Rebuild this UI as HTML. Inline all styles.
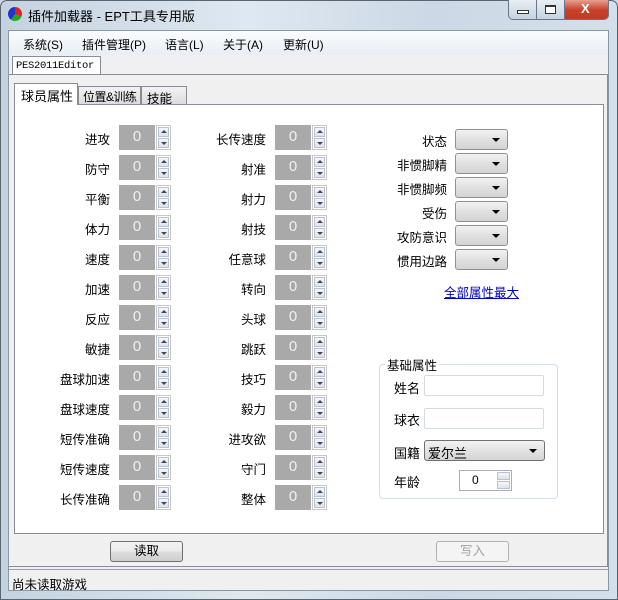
<!DOCTYPE html>
<html><head><meta charset="utf-8"><style>
*{margin:0;padding:0;box-sizing:border-box;white-space:nowrap}
body{width:618px;height:600px;position:relative;overflow:hidden;background:#c9d7e6;font-family:"Liberation Sans","Noto Sans CJK SC",sans-serif;font-size:12px;color:#000}
.a{position:absolute}
.frame{left:0;top:0;width:618px;height:600px;border:1px solid #5a6572;border-radius:7px 7px 0 0;background:linear-gradient(90deg,#c4d2e0,#dfe8f0 40%,#ccd8e5 70%,#d4dfea)}
.title{left:28px;top:6px;font-size:13px;color:#000}
.client{left:8px;top:30px;width:601px;height:561px;background:#f0f0f0;border:1px solid #8b97a3}
.menu{left:9px;top:31px;width:599px;height:24px;background:linear-gradient(#fafcfe,#e8eef5)}
.menu span{position:absolute;top:5px;font-size:12px}
.lbl{position:absolute;font-size:12.5px;text-align:right;width:70px}
.sp{position:absolute;width:52px;height:25px}
.sp .v{position:absolute;left:0;top:0;width:36px;height:25px;background:#a9a9a9;color:#f0f0f0;font-size:15px;text-align:center;line-height:23px}
.sp .b{position:absolute;left:37px;top:0;width:15px;height:25px;border:1px solid #c8c8c8;background:#fff}
.sp .b i{position:absolute;left:1px;width:11px;height:10px;background:linear-gradient(#f4f6fa,#dde3ec);border:1px solid #b8c2d0}
.sp .b i:after{content:"";position:absolute;left:2px;border-left:3px solid transparent;border-right:3px solid transparent}
.sp .b i.u{top:1px}.sp .b i.u:after{top:2px;border-bottom:3px solid #445}
.sp .b i.d{top:12px}.sp .b i.d:after{top:3px;border-top:3px solid #445}
.cb{position:absolute;left:455px;width:53px;height:21px;border:1px solid #8e8f8f;border-radius:3px;background:linear-gradient(#f2f2f2,#e0e0e0 50%,#d4d4d4)}
.cb:after{content:"";position:absolute;right:7px;top:8px;border-left:4px solid transparent;border-right:4px solid transparent;border-top:4px solid #000}
.btn{position:absolute;height:21px;border:1px solid #707070;border-radius:3px;background:linear-gradient(#f2f2f2,#ebebeb 50%,#dddddd 51%,#cfcfcf);text-align:center;line-height:19px;font-size:12.5px}
.in{position:absolute;background:#fff;border:1px solid #d5dbe2;border-radius:2px}
</style></head><body>
<div class="a frame"></div>
<div class="a" style="left:8px;top:7px;width:14px;height:14px;border-radius:50%;background:conic-gradient(#d22 0 30%,#2a2 30% 60%,#23c 60% 100%)"></div>
<div class="a title">插件加载器 - EPT工具专用版</div>
<div class="a" style="left:508px;top:0;width:101px;height:20px;border:1px solid #6b7787;border-top:none;border-radius:0 0 5px 5px;overflow:hidden;background:linear-gradient(#e8eef4,#c6d3e0)">
 <div class="a" style="left:27px;top:0;width:1px;height:20px;background:#6b7787"></div>
 <div class="a" style="left:55px;top:0;width:1px;height:20px;background:#6b7787"></div>
 <div class="a" style="left:8px;top:10px;width:12px;height:4px;border:1px solid #333;background:#fff"></div>
 <div class="a" style="left:36px;top:5px;width:11px;height:9px;border:1px solid #333;border-top-width:2px;background:#fff"></div>
 <div class="a" style="left:56px;top:0;width:45px;height:20px;background:linear-gradient(#e8a18f,#c8412a 50%,#c03a22)"></div>
 <div class="a" style="left:72px;top:1px;color:#fff;font-weight:bold;font-size:13px">X</div>
</div>
<div class="a client"></div>
<div class="a menu">
 <span style="left:14px">系统(S)</span><span style="left:73px">插件管理(P)</span><span style="left:156px">语言(L)</span><span style="left:214px">关于(A)</span><span style="left:274px">更新(U)</span>
</div>
<div class="a" style="left:12px;top:56px;width:89px;height:19px;background:#fff;border:1px solid #898c95;border-bottom:none;font-family:'Liberation Mono',monospace;font-size:10.5px;letter-spacing:-0.3px;padding:3px 0 0 3px">PES2011Editor</div>
<div class="a" style="left:9px;top:74px;width:599px;height:493px;border:1px solid #898c95;border-left:none;background:#f0f0f0"></div>
<div class="a" style="left:14px;top:104px;width:590px;height:430px;background:#fff;border:1px solid #898c95"></div>
<div class="a" style="left:78px;top:86px;width:63px;height:19px;border:1px solid #898c95;background:linear-gradient(#f2f2f2,#dcdcdc);font-size:12px;letter-spacing:-0.5px;padding:1px 0 0 4px;overflow:hidden">位置&amp;训练</div>
<div class="a" style="left:141px;top:86px;width:46px;height:19px;border:1px solid #898c95;background:linear-gradient(#f2f2f2,#dcdcdc);font-size:12.5px;padding:1px 0 0 5px">技能</div>
<div class="a" style="left:14px;top:83px;width:64px;height:22px;border:1px solid #898c95;border-bottom:none;background:#fff;font-size:13px;padding:2px 0 0 6px">球员属性</div>

<div class="lbl" style="left:40px;top:129px">进攻</div><div class="sp" style="left:119px;top:125px"><div class="v">0</div><div class="b"><i class="u"></i><i class="d"></i></div></div>
<div class="lbl" style="left:40px;top:159px">防守</div><div class="sp" style="left:119px;top:155px"><div class="v">0</div><div class="b"><i class="u"></i><i class="d"></i></div></div>
<div class="lbl" style="left:40px;top:189px">平衡</div><div class="sp" style="left:119px;top:185px"><div class="v">0</div><div class="b"><i class="u"></i><i class="d"></i></div></div>
<div class="lbl" style="left:40px;top:219px">体力</div><div class="sp" style="left:119px;top:215px"><div class="v">0</div><div class="b"><i class="u"></i><i class="d"></i></div></div>
<div class="lbl" style="left:40px;top:249px">速度</div><div class="sp" style="left:119px;top:245px"><div class="v">0</div><div class="b"><i class="u"></i><i class="d"></i></div></div>
<div class="lbl" style="left:40px;top:279px">加速</div><div class="sp" style="left:119px;top:275px"><div class="v">0</div><div class="b"><i class="u"></i><i class="d"></i></div></div>
<div class="lbl" style="left:40px;top:309px">反应</div><div class="sp" style="left:119px;top:305px"><div class="v">0</div><div class="b"><i class="u"></i><i class="d"></i></div></div>
<div class="lbl" style="left:40px;top:339px">敏捷</div><div class="sp" style="left:119px;top:335px"><div class="v">0</div><div class="b"><i class="u"></i><i class="d"></i></div></div>
<div class="lbl" style="left:40px;top:369px">盘球加速</div><div class="sp" style="left:119px;top:365px"><div class="v">0</div><div class="b"><i class="u"></i><i class="d"></i></div></div>
<div class="lbl" style="left:40px;top:399px">盘球速度</div><div class="sp" style="left:119px;top:395px"><div class="v">0</div><div class="b"><i class="u"></i><i class="d"></i></div></div>
<div class="lbl" style="left:40px;top:429px">短传准确</div><div class="sp" style="left:119px;top:425px"><div class="v">0</div><div class="b"><i class="u"></i><i class="d"></i></div></div>
<div class="lbl" style="left:40px;top:459px">短传速度</div><div class="sp" style="left:119px;top:455px"><div class="v">0</div><div class="b"><i class="u"></i><i class="d"></i></div></div>
<div class="lbl" style="left:40px;top:489px">长传准确</div><div class="sp" style="left:119px;top:485px"><div class="v">0</div><div class="b"><i class="u"></i><i class="d"></i></div></div>

<div class="lbl" style="left:196px;top:129px">长传速度</div><div class="sp" style="left:275px;top:125px"><div class="v">0</div><div class="b"><i class="u"></i><i class="d"></i></div></div>
<div class="lbl" style="left:196px;top:159px">射准</div><div class="sp" style="left:275px;top:155px"><div class="v">0</div><div class="b"><i class="u"></i><i class="d"></i></div></div>
<div class="lbl" style="left:196px;top:189px">射力</div><div class="sp" style="left:275px;top:185px"><div class="v">0</div><div class="b"><i class="u"></i><i class="d"></i></div></div>
<div class="lbl" style="left:196px;top:219px">射技</div><div class="sp" style="left:275px;top:215px"><div class="v">0</div><div class="b"><i class="u"></i><i class="d"></i></div></div>
<div class="lbl" style="left:196px;top:249px">任意球</div><div class="sp" style="left:275px;top:245px"><div class="v">0</div><div class="b"><i class="u"></i><i class="d"></i></div></div>
<div class="lbl" style="left:196px;top:279px">转向</div><div class="sp" style="left:275px;top:275px"><div class="v">0</div><div class="b"><i class="u"></i><i class="d"></i></div></div>
<div class="lbl" style="left:196px;top:309px">头球</div><div class="sp" style="left:275px;top:305px"><div class="v">0</div><div class="b"><i class="u"></i><i class="d"></i></div></div>
<div class="lbl" style="left:196px;top:339px">跳跃</div><div class="sp" style="left:275px;top:335px"><div class="v">0</div><div class="b"><i class="u"></i><i class="d"></i></div></div>
<div class="lbl" style="left:196px;top:369px">技巧</div><div class="sp" style="left:275px;top:365px"><div class="v">0</div><div class="b"><i class="u"></i><i class="d"></i></div></div>
<div class="lbl" style="left:196px;top:399px">毅力</div><div class="sp" style="left:275px;top:395px"><div class="v">0</div><div class="b"><i class="u"></i><i class="d"></i></div></div>
<div class="lbl" style="left:196px;top:429px">进攻欲</div><div class="sp" style="left:275px;top:425px"><div class="v">0</div><div class="b"><i class="u"></i><i class="d"></i></div></div>
<div class="lbl" style="left:196px;top:459px">守门</div><div class="sp" style="left:275px;top:455px"><div class="v">0</div><div class="b"><i class="u"></i><i class="d"></i></div></div>
<div class="lbl" style="left:196px;top:489px">整体</div><div class="sp" style="left:275px;top:485px"><div class="v">0</div><div class="b"><i class="u"></i><i class="d"></i></div></div>

<div class="lbl" style="left:377px;top:131px">状态</div><div class="cb" style="top:129px"></div>
<div class="lbl" style="left:377px;top:155px">非惯脚精</div><div class="cb" style="top:153px"></div>
<div class="lbl" style="left:377px;top:179px">非惯脚频</div><div class="cb" style="top:177px"></div>
<div class="lbl" style="left:377px;top:203px">受伤</div><div class="cb" style="top:201px"></div>
<div class="lbl" style="left:377px;top:227px">攻防意识</div><div class="cb" style="top:225px"></div>
<div class="lbl" style="left:377px;top:251px">惯用边路</div><div class="cb" style="top:249px"></div>
<div class="a" style="left:444px;top:282px;color:#0000cc;text-decoration:underline;font-size:12.5px">全部属性最大</div>

<div class="a" style="left:379px;top:364px;width:179px;height:135px;border:1px solid #d5dfe5;border-radius:4px"></div>
<div class="a" style="left:385px;top:355px;background:#fff;padding:0 2px;font-size:12.5px">基础属性</div>
<div class="a" style="left:394px;top:378px;font-size:13px">姓名</div><div class="in" style="left:424px;top:375px;width:120px;height:21px"></div>
<div class="a" style="left:394px;top:410px;font-size:13px">球衣</div><div class="in" style="left:424px;top:408px;width:120px;height:21px"></div>
<div class="a" style="left:394px;top:443px;font-size:13px">国籍</div>
<div class="a" style="left:424px;top:440px;width:121px;height:21px;border:1px solid #707070;border-radius:3px;background:linear-gradient(#f2f2f2,#e3e3e3 50%,#d4d4d4);font-size:13px;padding:2px 0 0 3px">爱尔兰<div class="a" style="right:7px;top:8px;border-left:4px solid transparent;border-right:4px solid transparent;border-top:4px solid #000"></div></div>
<div class="a" style="left:394px;top:472px;font-size:13px">年龄</div>
<div class="a" style="left:459px;top:470px;width:53px;height:21px;border:1px solid #abadb3;background:#fff">
 <div class="a" style="left:12px;top:2px;font-size:12px">0</div>
 <div class="a" style="left:37px;top:1px;width:13px;height:8px;background:linear-gradient(#f4f6fa,#dde3ec);border:1px solid #b8c2d0"></div>
 <div class="a" style="left:37px;top:10px;width:13px;height:8px;background:linear-gradient(#f4f6fa,#dde3ec);border:1px solid #b8c2d0"></div>
</div>

<div class="btn" style="left:110px;top:541px;width:73px">读取</div>
<div class="btn" style="left:436px;top:541px;width:73px;border-color:#adb2b5;background:#f4f4f4;color:#a0a0a0">写入</div>
<div class="a" style="left:9px;top:569px;width:599px;height:1px;background:#a0a0a0"></div>
<div class="a" style="left:12px;top:574px;font-size:12.5px">尚未读取游戏</div>
</body></html>
